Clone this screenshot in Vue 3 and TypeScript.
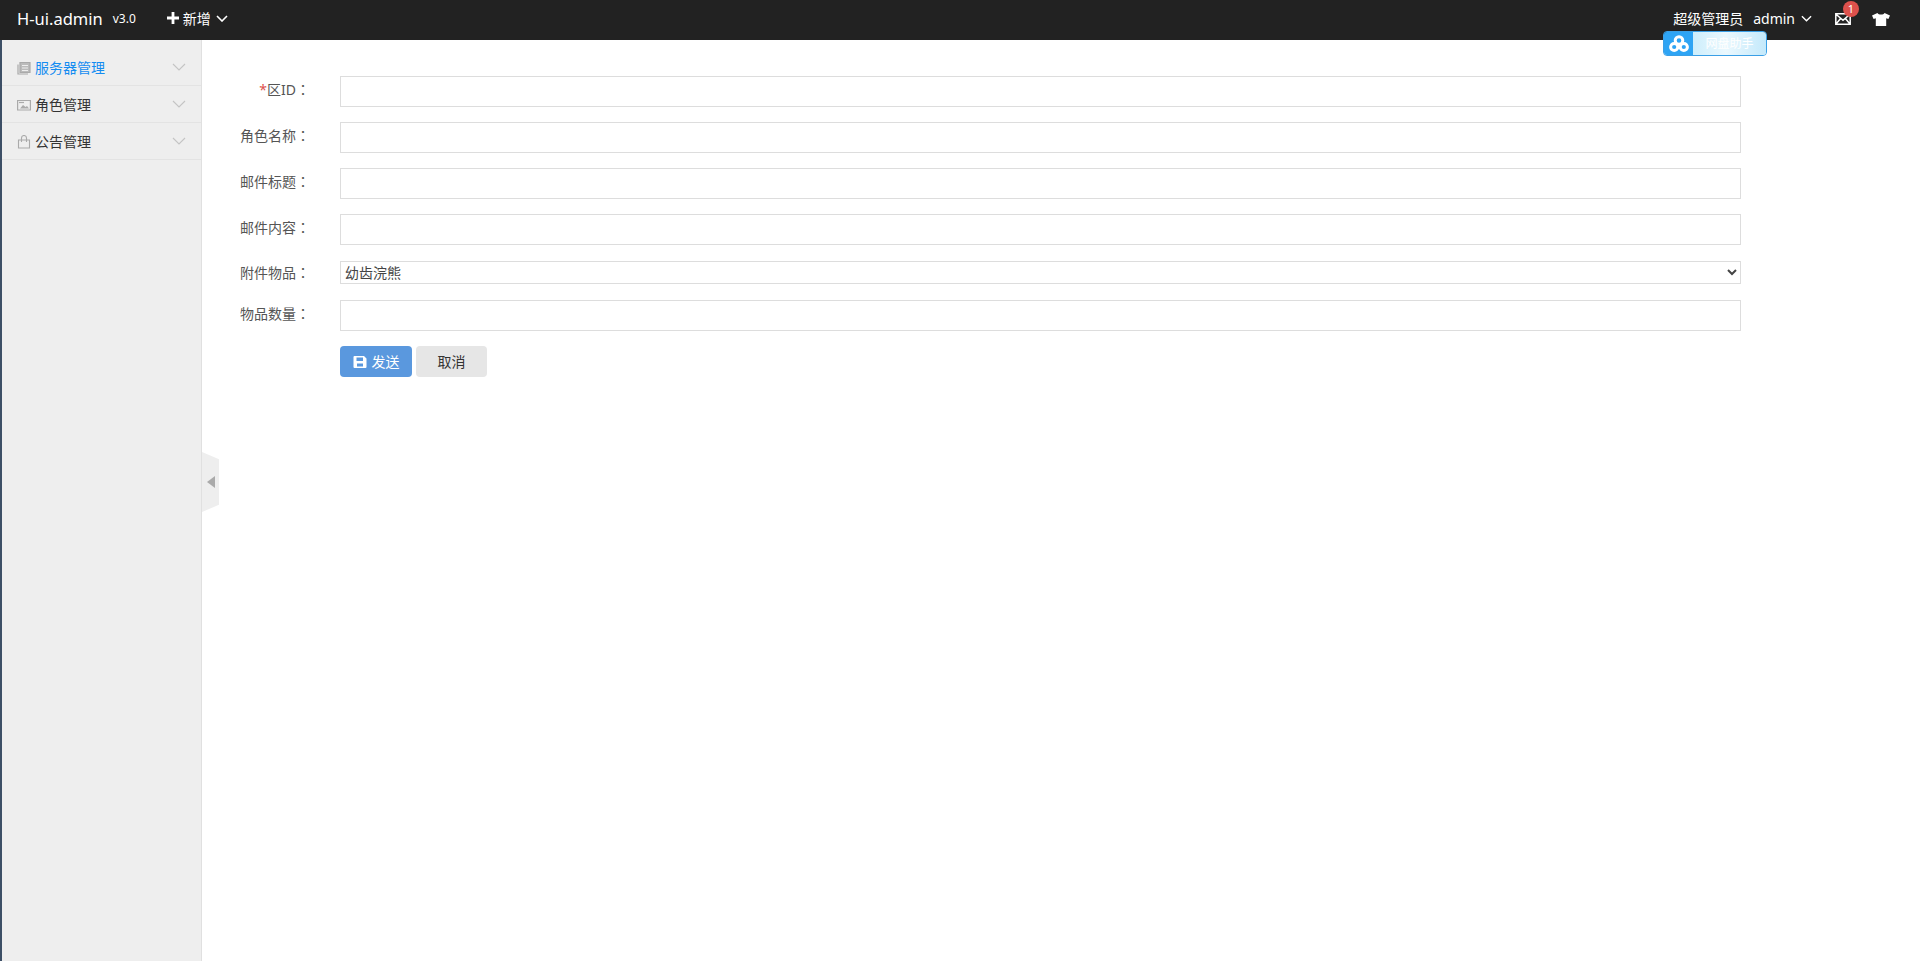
<script setup lang="ts">
const menus = [
  { title: '服务器管理', icon: 'docs', active: true },
  { title: '角色管理', icon: 'pic', active: false },
  { title: '公告管理', icon: 'bag', active: false },
];

const topFields = ['角色名称', '邮件标题', '邮件内容'];
</script>

<template>
  <div class="page">
    <header class="topbar">
      <span class="logo">H-ui.admin</span>
      <span class="version">v3.0</span>
      <span class="add">
        <svg class="plus" viewBox="0 0 12 12" width="12" height="12"><path d="M4.6 0h2.8v4.6H12v2.8H7.4V12H4.6V7.4H0V4.6h4.6z" fill="#fff" /></svg>
        新增
        <svg class="chev add-chev" viewBox="0 0 12 7" width="12" height="7"><path d="M1 1l5 5 5-5" fill="none" stroke="#fff" stroke-width="1.6" /></svg>
      </span>
      <div class="top-right">
        <span class="role">超级管理员</span>
        <span class="user">admin</span>
        <svg class="chev user-chev" viewBox="0 0 12 7" width="11" height="7"><path d="M1 1l5 5 5-5" fill="none" stroke="#fff" stroke-width="1.5" /></svg>
        <span class="mail">
          <svg viewBox="0 0 16 12" width="16" height="12"><path d="M.8.8h14.4v10.4H.8zM1 1.2l7 6 7-6M1 11l4.6-5.4M15 11l-4.6-5.4" fill="none" stroke="#fff" stroke-width="1.5" /></svg>
          <span class="badge">1</span>
        </span>
        <svg class="shirt" viewBox="0 0 18 13" width="18" height="13"><path d="M5.5 0L0 2.5 1.6 6l2.2-.8V13h10.4V5.2l2.2.8L18 2.5 12.5 0C11.5 2 6.5 2 5.5 0z" fill="#fff" /></svg>
      </div>
      <div class="netdisk">
        <span class="netdisk-icon">
          <svg viewBox="0 0 20 18" width="20" height="18"><g fill="none" stroke="#fff" stroke-width="3"><circle cx="10" cy="5.5" r="3.8" /><circle cx="5.2" cy="12" r="3.6" /><circle cx="14.8" cy="12" r="3.6" /></g></svg>
        </span>
        <span class="netdisk-text">网盘助手</span>
      </div>
    </header>

    <div class="body">
      <aside class="sidebar">
        <div v-for="m in menus" :key="m.title" class="menu-row" :class="{ active: m.active }">
          <svg class="menu-icon" viewBox="0 0 14 14" width="14" height="14">
            <g v-if="m.icon === 'docs'" fill="none" stroke="#aaa" stroke-width="1.2">
              <path d="M3 1.5h10v10H3z" fill="#bbb" />
              <path d="M1 3.5V13h10" />
              <path d="M5 4.500h6M5 7h6M5 9.500h6" stroke="#eee" />
            </g>
            <g v-else-if="m.icon === 'pic'" fill="none" stroke="#aaa" stroke-width="1.2">
              <path d="M.6 2.5h12.800V12H.6z" />
              <path d="M3 10.500L6 7l2.500 2L10 8l2 2.500z" fill="#aaa" stroke="none" />
              <path d="M2 4.500h5" />
            </g>
            <g v-else fill="none" stroke="#aaa" stroke-width="1.1">
              <path d="M1.500 5h11v8h-11z" />
              <path d="M4.500 7V3a2.500 2.500 0 0 1 5 0v4" />
            </g>
          </svg>
          <span class="menu-title">{{ m.title }}</span>
          <svg class="menu-chev" viewBox="0 0 14 8" width="14" height="8"><path d="M1 1l6 6 6-6" fill="none" stroke="#c4c4c4" stroke-width="1.1" /></svg>
        </div>
      </aside>

      <div class="handle"><i class="handle-arrow"></i></div>

      <main class="content">
        <form class="form" @submit.prevent>
          <div class="row">
            <label class="label"><span class="star">*</span>区ID<span class="colon">：</span></label>
            <input class="input" type="text" />
          </div>
          <div v-for="f in topFields" :key="f" class="row">
            <label class="label">{{ f }}<span class="colon">：</span></label>
            <input class="input" type="text" />
          </div>
          <div class="row row-select">
            <label class="label">附件物品<span class="colon">：</span></label>
            <select class="select">
              <option>幼齿浣熊</option>
            </select>
          </div>
          <div class="row">
            <label class="label">物品数量<span class="colon">：</span></label>
            <input class="input" type="text" />
          </div>
          <div class="row">
            <span class="label"></span>
            <div class="buttons">
              <button class="btn btn-send" type="submit">
                <svg viewBox="0 0 14 14" width="14" height="14"><path fill-rule="evenodd" d="M1.5 1H11l2.5 2.500V12a1 1 0 0 1-1 1h-11a1 1 0 0 1-1-1V2a1 1 0 0 1 1-1zM3.500 2.500V6H10V2.500zM4 8.500v3h6v-3z" fill="#fff" /></svg>
                发送
              </button>
              <button class="btn btn-cancel" type="button">取消</button>
            </div>
          </div>
        </form>
      </main>
    </div>
  </div>
</template>

<style>
html, body {
  margin: 0;
  background: #fff;
}
</style>

<style scoped>
.page {
  height: 961px;
  display: flex;
  flex-direction: column;
  overflow: hidden;
  font-family: "Noto Sans", "Noto Sans CJK SC", sans-serif;
  font-size: 14px;
  color: #333;
}
.topbar {
  position: relative;
  flex: 0 0 40px;
  box-sizing: border-box;
  height: 40px;
  display: flex;
  align-items: center;
  padding: 0 30px 4px 17px;
  background: #222;
  color: #fff;
}
.logo {
  font-size: 16.5px;
}
.version {
  margin-left: 10px;
  font-size: 12px;
}
.add {
  margin-left: 31px;
  display: flex;
  align-items: center;
  gap: 4px;
}
.add-chev {
  margin-left: 1px;
}
.chev {
  display: block;
}
.top-right {
  margin-left: auto;
  display: flex;
  align-items: center;
}
.user {
  margin-left: 10px;
}
.user-chev {
  margin-left: 6px;
}
.mail {
  position: relative;
  display: flex;
  margin-left: 23px;
  margin-top: 2px;
}
.badge {
  position: absolute;
  top: -12px;
  left: 8px;
  width: 16px;
  height: 16px;
  border-radius: 50%;
  background: #dd514c;
  font-size: 11px;
  line-height: 16px;
  text-align: center;
}
.shirt {
  margin-left: 21px;
  margin-top: 2px;
}
.netdisk {
  position: absolute;
  top: 31px;
  left: 1663px;
  box-sizing: border-box;
  width: 104px;
  height: 25px;
  display: flex;
  border: 1px solid #3a9fe6;
  border-radius: 4px;
  overflow: hidden;
  z-index: 2;
}
.netdisk-icon {
  flex: 0 0 29px;
  display: flex;
  align-items: center;
  justify-content: center;
  background: #2ea4f4;
}
.netdisk-text {
  flex: 1;
  background: linear-gradient(90deg, #cdeefc, #eaf8fe 45%, #c4e9fb);
  color: #fff;
  font-size: 12px;
  line-height: 23px;
  text-align: center;
}
.body {
  position: relative;
  flex: 1;
  display: flex;
  min-height: 0;
}
.sidebar {
  flex: 0 0 202px;
  box-sizing: border-box;
  padding-top: 9px;
  background: #eee;
  border-left: 2px solid #3d4f66;
  border-right: 1px solid #e0e0e0;
}
.menu-row {
  box-sizing: content-box;
  display: flex;
  align-items: center;
  height: 34px;
  padding: 2px 15px 0;
  border-bottom: 1px solid #e3e3e3;
  color: #333;
}
.menu-row.active .menu-title {
  color: #148cf1;
}
.menu-icon {
  flex: none;
}
.menu-title {
  margin-left: 4px;
  line-height: 20px;
}
.menu-chev {
  margin-left: auto;
  margin-top: -3px;
}
.handle {
  position: absolute;
  left: 202px;
  top: 412px;
  width: 17px;
  height: 60px;
  display: flex;
  align-items: center;
  justify-content: center;
  background: #eee;
  clip-path: polygon(0 0, 100% 12%, 100% 88%, 0 100%);
}
.handle-arrow {
  width: 0;
  height: 0;
  border-style: solid;
  border-width: 6px 8px 6px 0;
  border-color: transparent #aaa transparent transparent;
}
.content {
  flex: 1;
  min-width: 0;
  padding-top: 36px;
}
.form {
  display: flex;
  flex-direction: column;
  gap: 15px;
}
.row {
  display: flex;
  align-items: center;
}
.row-select {
  padding: 1px 0;
}
.label {
  flex: 0 0 108px;
  margin-right: 30px;
  padding-bottom: 4px;
  text-align: right;
  color: #555;
  line-height: 20px;
  white-space: nowrap;
}
.row-select .label {
  padding-bottom: 0;
}
/* TC font centres the full-width colon in its cell */
.colon {
  font-family: "Noto Sans CJK TC", sans-serif;
}
.star {
  color: #dd514c;
}
.input {
  box-sizing: border-box;
  width: 1401px;
  height: 31px;
  padding: 4px;
  border: 1px solid #ddd;
  border-radius: 0;
  outline: none;
  background: #fff;
  font: inherit;
}
.select {
  box-sizing: border-box;
  width: 1401px;
  height: 23px;
  padding: 0;
  border: 1px solid #ddd;
  border-radius: 0;
  background: #fff;
  color: #444;
  font: inherit;
  line-height: 21px;
  outline: none;
}
.buttons {
  display: flex;
  gap: 4px;
}
.btn {
  box-sizing: border-box;
  display: flex;
  align-items: center;
  justify-content: center;
  height: 31px;
  padding: 0;
  border: 0;
  border-radius: 4px;
  font: inherit;
  line-height: 20px;
}
.btn-send {
  width: 72px;
  gap: 5px;
  background: #5a98de;
  color: #fff;
}
.btn-cancel {
  width: 71px;
  background: #e6e6e6;
  color: #333;
}
</style>
